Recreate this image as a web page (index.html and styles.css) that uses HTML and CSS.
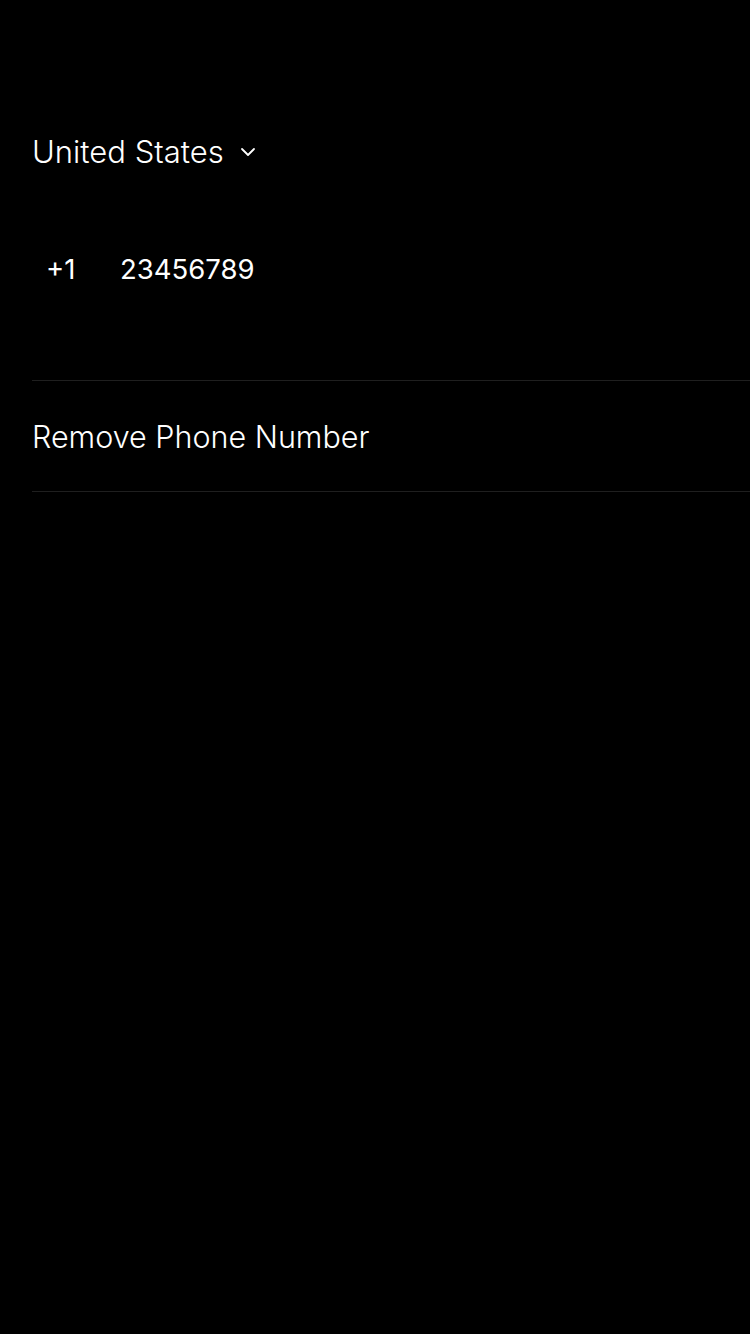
FILE: index.html
```html
<!DOCTYPE html>
<html>
<head>
<meta charset="utf-8">
<link rel="stylesheet" href="styles.css">
</head>
<body>
<div class="screen">
  <div class="country">
    <span class="country-name">United States</span>
    <svg class="chevron" width="16" height="10" viewBox="0 0 16 10"><path d="M2 2 L8 8 L14 2" fill="none" stroke="#fff" stroke-width="1.8" stroke-linecap="round" stroke-linejoin="round"/></svg>
  </div>
  <div class="phone">
    <span class="code">+1</span>
    <span class="number">23456789</span>
  </div>
  <div class="list">
    <div class="row">Remove Phone Number</div>
  </div>
</div>
</body>
</html>
```
FILE: styles.css
```css
html, body {
  margin: 0;
  padding: 0;
  background: #000;
}
body {
  font-family: Inter, "Noto Sans", sans-serif;
  font-weight: 300;
  color: #fff;
}
.screen {
  width: 750px;
  height: 1334px;
  box-sizing: border-box;
  padding-top: 126px;
}
.country {
  display: flex;
  align-items: center;
  gap: 16px;
  padding-left: 32px;
  height: 50px;
}
.country-name {
  font-size: 31px;
  letter-spacing: 0;
}
.chevron {
  margin-top: 2px;
}
.phone {
  display: flex;
  align-items: center;
  padding-left: 46px;
  height: 50px;
  margin-top: 68px;
  font-size: 27.5px;
  font-weight: 400;
}
.code {
  width: 74px;
}
.list {
  margin-top: 86px;
  margin-left: 32px;
  border-top: 1px solid #1f1f1f;
}
.row {
  height: 110px;
  display: flex;
  align-items: center;
  font-size: 30.5px;
  letter-spacing: 0;
  border-bottom: 1px solid #1f1f1f;
}
```
